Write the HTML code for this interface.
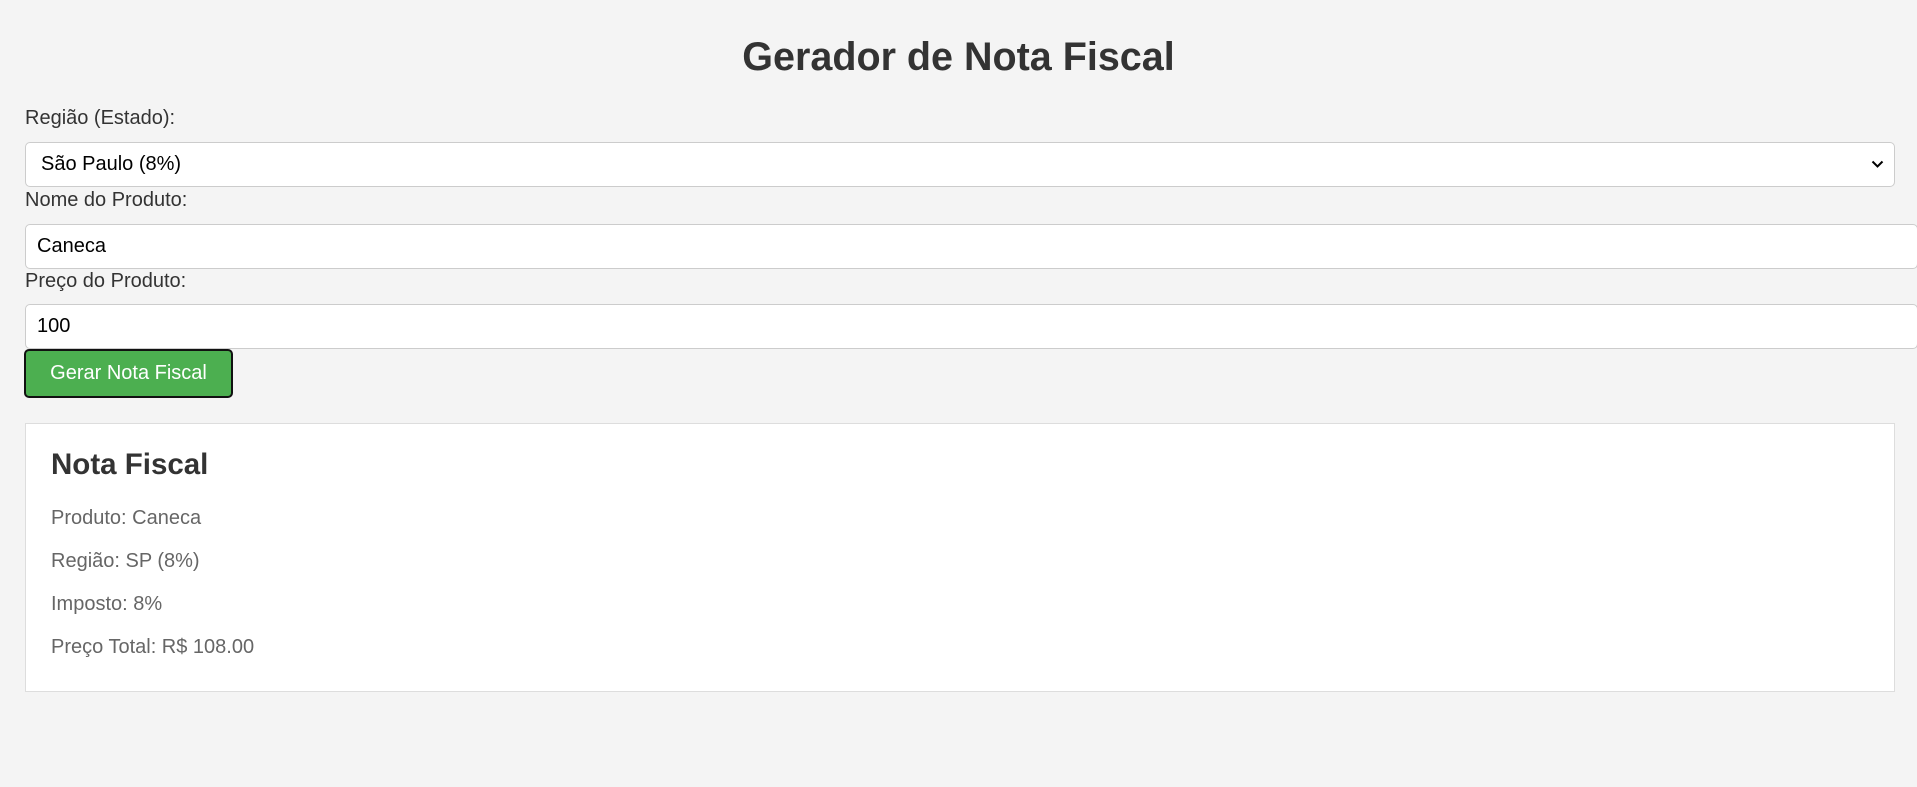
<!DOCTYPE html>
<html><head><meta charset="utf-8"><style>
*{box-sizing:border-box}
body{margin:0;width:1917px;height:787px;background:#f4f4f4;font-family:"Liberation Sans",Arial,sans-serif;position:relative;overflow:hidden;color:#333}
.a{position:absolute;white-space:nowrap}
h1{position:absolute;left:0;width:1917px;top:33px;margin:0;text-align:center;font-size:39.5px;line-height:48px;font-weight:bold;color:#333}
.lbl{font-size:20px;line-height:22px;color:#333}
.box{background:#fff;border:1px solid #ccc;border-radius:5px;font-size:20px;color:#000;display:flex;align-items:center}
.btn{background:#4CAF50;border:2px solid #111;border-radius:5px;color:#fff;font-size:20px;display:flex;align-items:center;justify-content:center}
.card{background:#fff;border:1px solid #ddd}
.p{font-size:20px;line-height:22px;color:#666}
</style></head><body>
<h1>Gerador de Nota Fiscal</h1>
<div class="a lbl" style="left:25px;top:107px">Região (Estado):</div>
<div class="a box" style="left:25px;top:142px;width:1870px;height:45px;padding-left:15px">São Paulo (8%)
<svg style="position:absolute;right:10px;top:17px" width="13" height="9" viewBox="0 0 13 9"><path d="M1.5 1.5 L6.5 6.5 L11.5 1.5" fill="none" stroke="#000" stroke-width="2"/></svg></div>
<div class="a lbl" style="left:25px;top:189px">Nome do Produto:</div>
<div class="a box" style="left:25px;top:224px;width:1893px;height:45px;padding-left:11px">Caneca</div>
<div class="a lbl" style="left:25px;top:270px">Preço do Produto:</div>
<div class="a box" style="left:25px;top:304px;width:1893px;height:45px;padding-left:11px">100</div>
<div class="a btn" style="left:24px;top:349px;width:209px;height:49px">Gerar Nota Fiscal</div>
<div class="a card" style="left:25px;top:423px;width:1870px;height:269px"></div>
<div class="a" style="left:51px;top:447px;font-size:29.5px;line-height:36px;font-weight:bold;color:#333">Nota Fiscal</div>
<div class="a p" style="left:51px;top:507px">Produto: Caneca</div>
<div class="a p" style="left:51px;top:550px">Região: SP (8%)</div>
<div class="a p" style="left:51px;top:593px">Imposto: 8%</div>
<div class="a p" style="left:51px;top:636px">Preço Total: R$ 108.00</div>
</body></html>
